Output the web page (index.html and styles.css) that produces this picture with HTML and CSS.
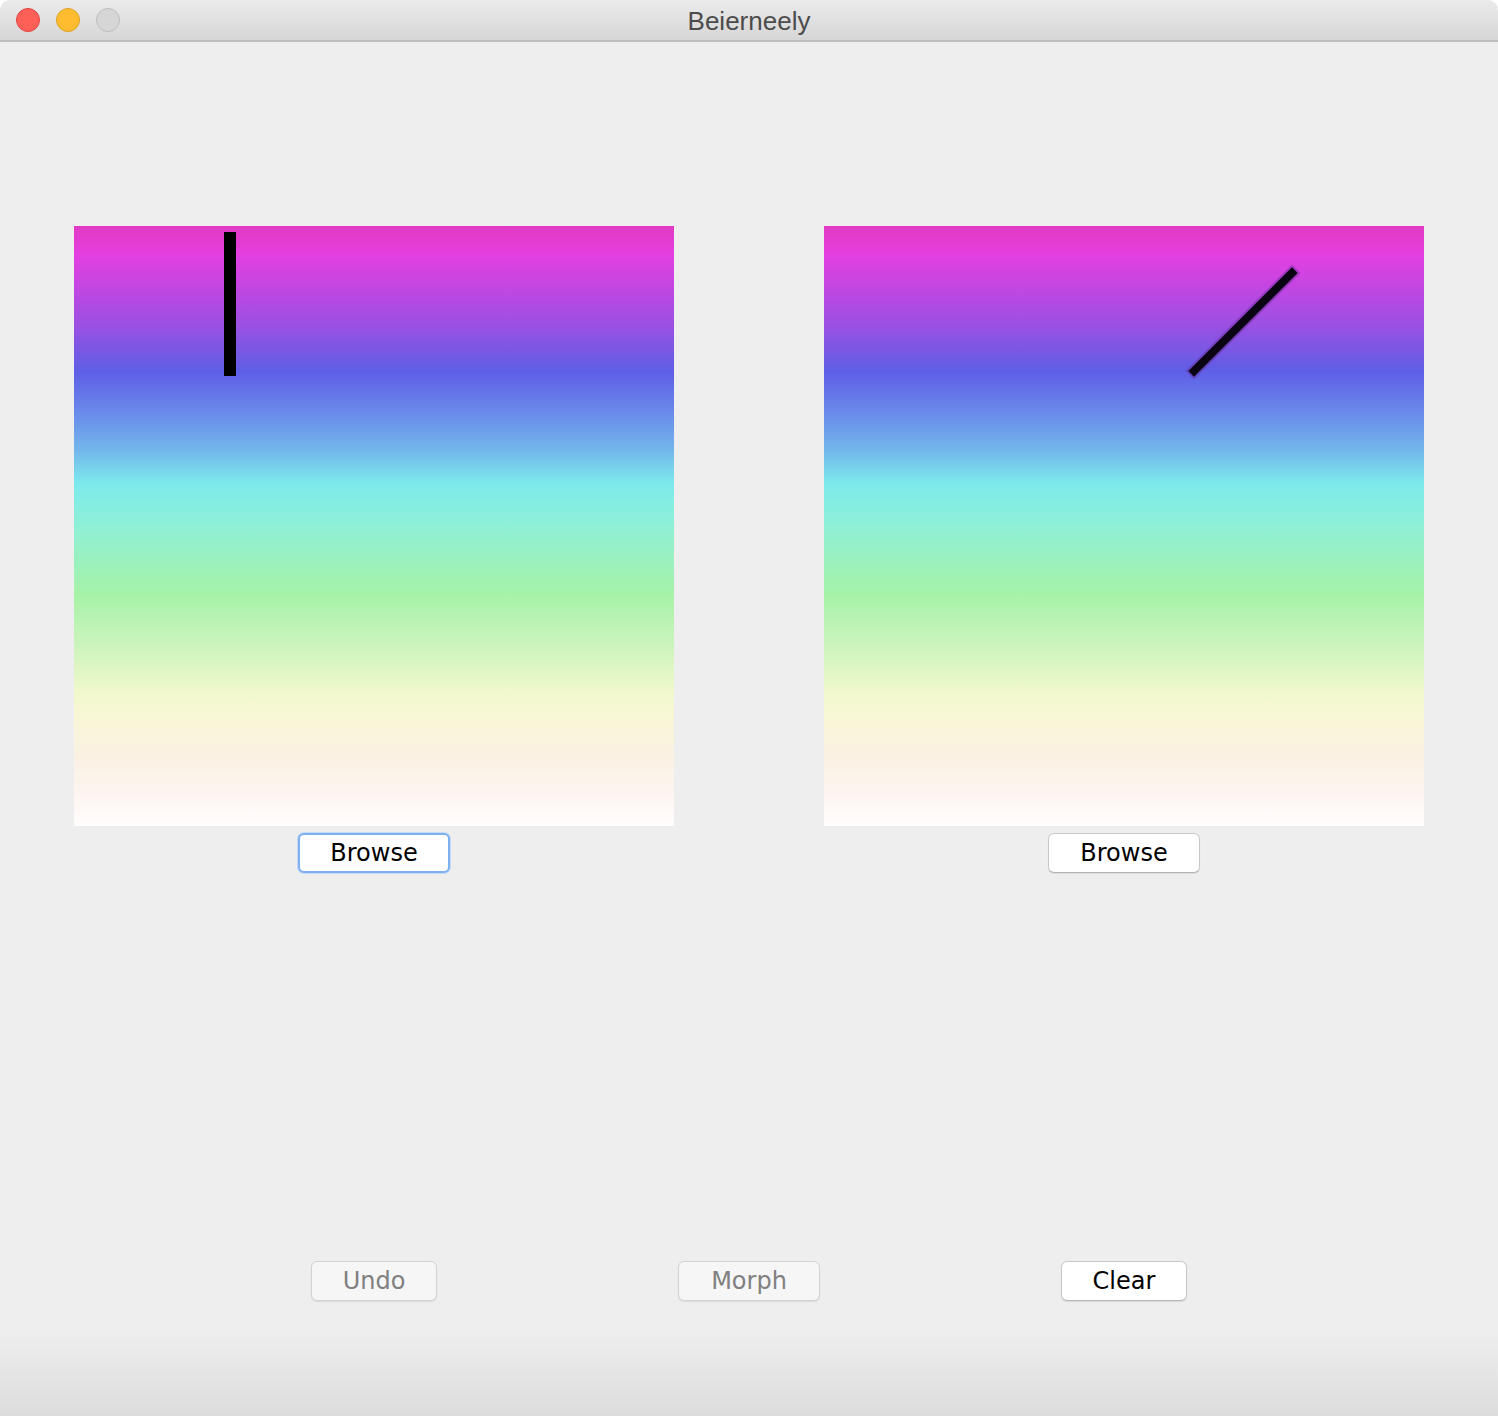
FILE: index.html
```html
<!DOCTYPE html>
<html>
<head>
<meta charset="utf-8">
<title>Beierneely</title>
<link rel="stylesheet" href="styles.css">
</head>
<body>
<div class="window">
  <div class="titlebar">
    <div class="lights">
      <span class="light red"></span>
      <span class="light yellow"></span>
      <span class="light gray"></span>
    </div>
    <div class="title">Beierneely</div>
  </div>
  <div class="content">
    <div class="panels">
      <div class="panel">
        <div class="canvas">
          <svg class="marks" width="600" height="600" viewBox="0 0 600 600">
            <rect x="150" y="6" width="12" height="144" fill="#000"/>
          </svg>
        </div>
        <button class="btn focused">Browse</button>
      </div>
      <div class="panel">
        <div class="canvas">
          <svg class="marks" width="600" height="600" viewBox="0 0 600 600">
            <line x1="370" y1="145" x2="468" y2="47" stroke="#6a2a9a" stroke-width="12" stroke-linecap="square" opacity="0.45"/>
            <line x1="370" y1="145" x2="468" y2="47" stroke="#0a0414" stroke-width="8" stroke-linecap="square"/>
          </svg>
        </div>
        <button class="btn">Browse</button>
      </div>
    </div>
    <div class="actions">
      <div class="slot"><button class="btn disabled">Undo</button></div>
      <div class="slot mid"><button class="btn disabled morph">Morph</button></div>
      <div class="slot"><button class="btn">Clear</button></div>
    </div>
  </div>
</div>
</body>
</html>
```
FILE: styles.css
```css
html, body {
  margin: 0;
  padding: 0;
  background: #ffffff;
}
.window {
  width: 1498px;
  height: 1416px;
  display: flex;
  flex-direction: column;
  overflow: hidden;
}
.titlebar {
  height: 40px;
  border-bottom: 2px solid #bdbdbd;
  background: linear-gradient(to bottom, #ebebeb 0%, #d6d6d6 100%);
  border-radius: 10px 10px 0 0;
  position: relative;
  display: flex;
  align-items: center;
  justify-content: center;
}
.lights {
  position: absolute;
  left: 16px;
  top: 8px;
  display: flex;
  gap: 16px;
}
.light {
  width: 24px;
  height: 24px;
  border-radius: 50%;
  box-sizing: border-box;
  border: 1px solid;
}
.red { background: #fe5f57; border-color: #e0443e; }
.yellow { background: #febc2e; border-color: #dea123; }
.gray { background: #d6d6d6; border-color: #bdbdbd; }
.title {
  font-family: "Liberation Sans", Arial, sans-serif;
  font-size: 26px;
  color: #4c4c4c;
  margin-top: 2px;
}
.content {
  flex: 1;
  background: linear-gradient(to bottom, #eeeeee 0, #eeeeee calc(100% - 84px), #dcdcdc 100%);
  padding-top: 184px;
  display: flex;
  flex-direction: column;
}
.panels {
  display: flex;
  gap: 150px;
  padding: 0 74px;
}
.panel {
  width: 600px;
  display: flex;
  flex-direction: column;
  align-items: center;
  gap: 7px;
}
.canvas {
  width: 600px;
  height: 600px;
  position: relative;
  background: linear-gradient(to bottom,
    #e23ac4 0px,
    #e23cd0 14px,
    #e43fe0 28px,
    #c446e2 60px,
    #9a50e2 100px,
    #5e5ee6 145px,
    #6a88ea 185px,
    #72b8ec 225px,
    #7eeaec 258px,
    #8ef0d6 300px,
    #a6f2a8 368px,
    #ccf4bc 420px,
    #f0f8cc 465px,
    #f9f7d6 490px,
    #faf1e2 530px,
    #fdf4f0 565px,
    #fffdfd 600px);
}
.marks {
  position: absolute;
  left: 0;
  top: 0;
}
.btn {
  font-family: "DejaVu Sans", Verdana, sans-serif;
  font-size: 24px;
  height: 40px;
  padding: 0 31px;
  box-sizing: border-box;
  background: #ffffff;
  color: #000000;
  border: 1px solid #c8c8c8;
  border-bottom-color: #b4b4b4;
  border-radius: 6px;
  box-shadow: 0 1px 1px rgba(0,0,0,0.08);
  line-height: 36px;
  margin: 0;
}
.focused {
  border: 2px solid #7eb0ef;
  box-shadow: 0 0 0 1px #c4daf6;
  padding: 0 30px;
}
.disabled {
  background: #f6f6f6;
  color: #808080;
  border-color: #d2d2d2;
}
.morph {
  padding: 0 32px;
}
.actions {
  margin-top: 388px;
  display: flex;
  padding: 0 74px;
}
.slot {
  width: 600px;
  display: flex;
  justify-content: center;
}
.slot.mid {
  width: 150px;
}
```
